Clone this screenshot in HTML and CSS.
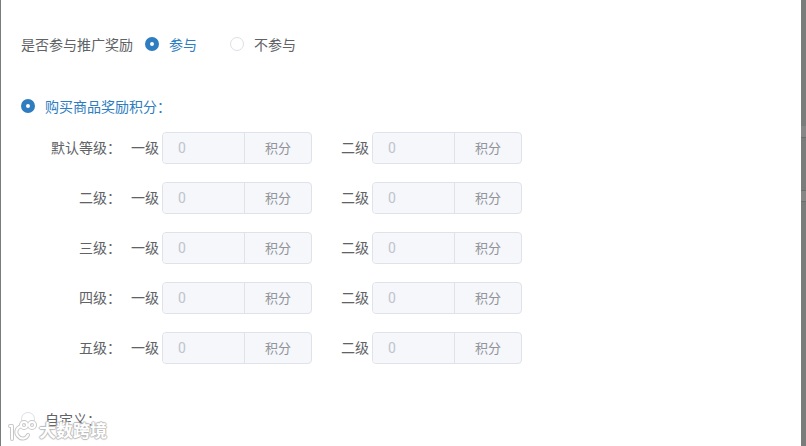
FILE: index.html
```html
<!DOCTYPE html>
<html lang="zh-CN">
<head>
  <meta charset="UTF-8" />
  <meta name="viewport" content="width=device-width, initial-scale=1" />
  <title>推广奖励</title>
  <link rel="stylesheet" href="styles.css">
</head>
<body>
  <main class="dialog">
    <form>
      <div class="join-row">
        <span class="title" id="joinTitle">是否参与推广奖励</span>
        <div class="radio-group" role="radiogroup" aria-labelledby="joinTitle">
          <label class="radio"><input type="radio" name="join" value="1" checked /><span>参与</span></label>
          <label class="radio"><input type="radio" name="join" value="0" /><span>不参与</span></label>
        </div>
      </div>

      <label class="radio reward-type"><input type="radio" name="rewardType" value="points" checked /><span>购买商品奖励积分：</span></label>

      <div class="levels">
        <div class="level">
          <span class="level-name">默认等级：</span>
          <div class="field">
            <label for="l0a">一级</label>
            <div class="input-group"><input type="text" id="l0a" placeholder="0" disabled /><span class="unit">积分</span></div>
          </div>
          <div class="field">
            <label for="l0b">二级</label>
            <div class="input-group"><input type="text" id="l0b" placeholder="0" disabled /><span class="unit">积分</span></div>
          </div>
        </div>
        <div class="level">
          <span class="level-name">二级：</span>
          <div class="field">
            <label for="l2a">一级</label>
            <div class="input-group"><input type="text" id="l2a" placeholder="0" disabled /><span class="unit">积分</span></div>
          </div>
          <div class="field">
            <label for="l2b">二级</label>
            <div class="input-group"><input type="text" id="l2b" placeholder="0" disabled /><span class="unit">积分</span></div>
          </div>
        </div>
        <div class="level">
          <span class="level-name">三级：</span>
          <div class="field">
            <label for="l3a">一级</label>
            <div class="input-group"><input type="text" id="l3a" placeholder="0" disabled /><span class="unit">积分</span></div>
          </div>
          <div class="field">
            <label for="l3b">二级</label>
            <div class="input-group"><input type="text" id="l3b" placeholder="0" disabled /><span class="unit">积分</span></div>
          </div>
        </div>
        <div class="level">
          <span class="level-name">四级：</span>
          <div class="field">
            <label for="l4a">一级</label>
            <div class="input-group"><input type="text" id="l4a" placeholder="0" disabled /><span class="unit">积分</span></div>
          </div>
          <div class="field">
            <label for="l4b">二级</label>
            <div class="input-group"><input type="text" id="l4b" placeholder="0" disabled /><span class="unit">积分</span></div>
          </div>
        </div>
        <div class="level">
          <span class="level-name">五级：</span>
          <div class="field">
            <label for="l5a">一级</label>
            <div class="input-group"><input type="text" id="l5a" placeholder="0" disabled /><span class="unit">积分</span></div>
          </div>
          <div class="field">
            <label for="l5b">二级</label>
            <div class="input-group"><input type="text" id="l5b" placeholder="0" disabled /><span class="unit">积分</span></div>
          </div>
        </div>
      </div>

      <label class="radio custom-type"><input type="radio" name="rewardType" value="custom" /><span>自定义：</span></label>
    </form>

    <div class="watermark">
      <svg width="32" height="24" viewBox="0 0 32 24" fill="none" stroke-linecap="round" stroke-linejoin="round" aria-hidden="true">
        <g stroke="#c8c8c8" stroke-width="4">
          <path d="M3 8h2v13M14 8c-5 2-6 7-3 10 3 4 8 3 10-1" />
          <rect x="14" y="4" width="6" height="6" rx="3" />
          <rect x="22" y="4" width="6" height="6" rx="3" />
        </g>
        <g stroke="#fff" stroke-width="2">
          <path d="M3 8h2v13M14 8c-5 2-6 7-3 10 3 4 8 3 10-1" />
          <rect x="14" y="4" width="6" height="6" rx="3" />
          <rect x="22" y="4" width="6" height="6" rx="3" />
        </g>
      </svg>
      <span>大数跨境</span>
    </div>
  </main>
</body>
</html>
```
FILE: styles.css
```css
* {
  box-sizing: border-box;
}
body {
  margin: 0;
  padding: 0 5px 0 1px;
  background-color: #7a7b7b;
  background-image: linear-gradient(transparent 126px, #868686 126px, #868686 137px, #6c6c6c 137px, #6c6c6c 138px, transparent 138px, transparent 190px, #6c6c6c 190px, #6c6c6c 191px, #868686 191px, #868686 201px, #6c6c6c 201px, #6c6c6c 202px, transparent 202px);
  background-position: right top;
  background-repeat: no-repeat;
  background-size: 5px 100%;
  font-family: "Noto Sans CJK SC", sans-serif;
  font-size: 14px;
  line-height: 20px;
  color: #606266;
}
.dialog {
  position: relative;
  min-height: 100vh;
  padding: 34px 20px 16px;
  background: #fff;
}
.join-row,
.radio-group,
.radio,
.level,
.field,
.input-group {
  display: flex;
  align-items: center;
}
.join-row {
  gap: 12px;
}
.radio-group {
  gap: 33px;
}
.radio {
  gap: 10px;
  cursor: pointer;
}
.radio input {
  appearance: none;
  width: 14px;
  height: 14px;
  margin: 0;
  border: 1px solid #dcdfe6;
  border-radius: 50%;
  background: #fff;
}
.radio input:checked {
  border: 5px solid #2d7dc0;
}
.radio input:checked + span {
  color: #2d7dc0;
}
.reward-type {
  margin-top: 42px;
}

/* points par niveau */
.levels {
  display: grid;
  gap: 18px;
  margin-top: 16px;
}
.level-name,
.field label {
  padding-bottom: 3px;
}
.level-name {
  width: 100px;
  margin-right: 10px;
  text-align: right;
}
.field {
  gap: 3px;
  margin-right: 29px;
}
.input-group {
  width: 150px;
  height: 32px;
  border: 1px solid #dfe2e9;
  border-radius: 4px;
  background: #f5f7fb;
  overflow: hidden;
}
.input-group input {
  flex: 1;
  min-width: 0;
  height: 30px;
  padding: 0 15px;
  border: none;
  background: #f5f7fb;
  font-family: Roboto, sans-serif;
  font-size: 14px;
}
.input-group input::placeholder {
  color: #c0c4cc;
}
.unit {
  padding: 0 20px;
  border-left: 1px solid #dfe2e9;
  color: #909399;
  font-size: 13px;
  line-height: 30px;
}
.custom-type {
  margin-top: 45px;
}

.watermark {
  position: absolute;
  left: 6px;
  bottom: 4px;
  display: flex;
  align-items: center;
  color: #fff;
  font-size: 17px;
  font-weight: bold;
  line-height: 24px;
  text-shadow: 1px 0 1px #bbb, -1px 0 1px #bbb, 0 1px 1px #bbb, 0 -1px 1px #bbb;
  pointer-events: none;
}
```
